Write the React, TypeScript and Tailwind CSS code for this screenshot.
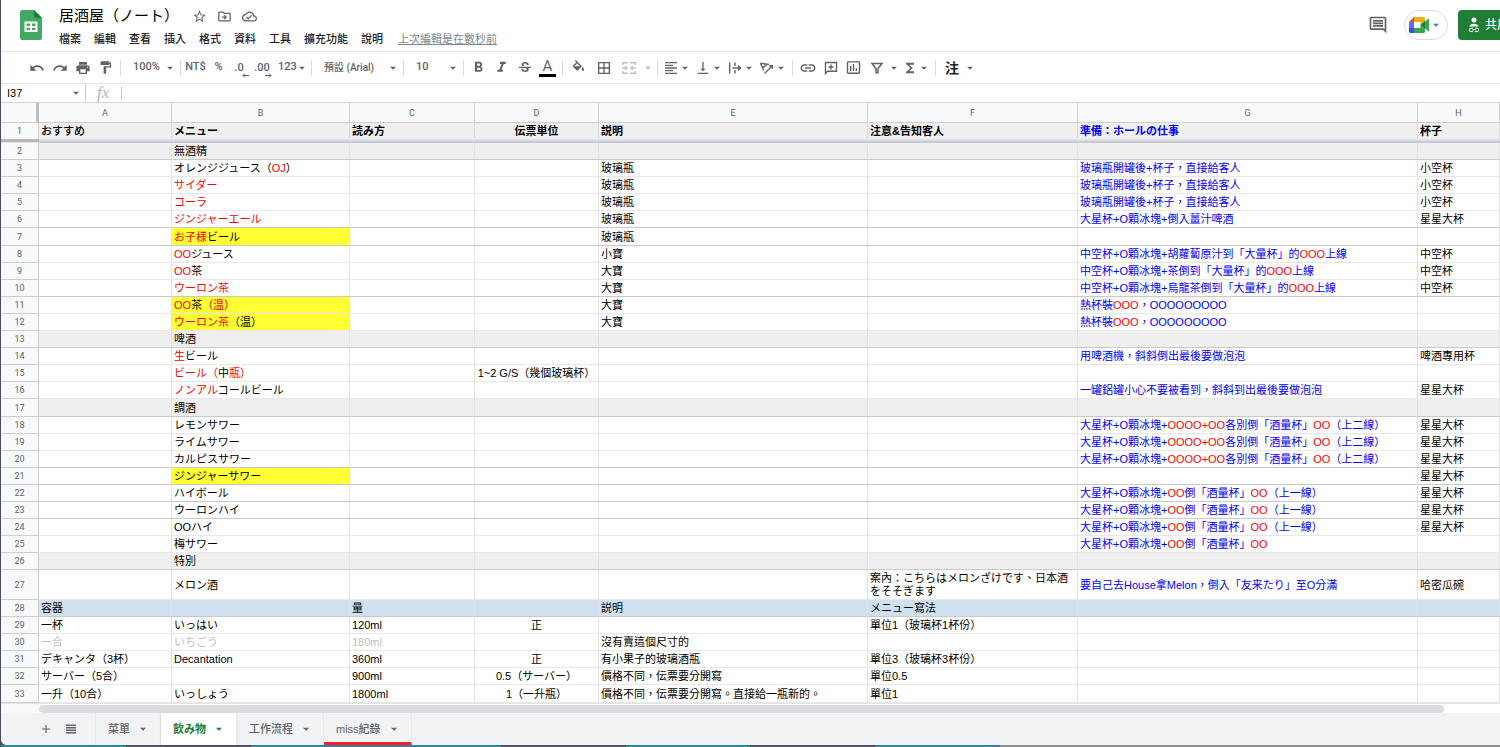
import { useState, type ReactNode } from 'react';
import {
  MdAdd,
  MdArrowDropDown,
  MdBorderAll,
  MdFormatAlignLeft,
  MdFormatBold,
  MdFormatItalic,
  MdFormatPaint,
  MdFunctions,
  MdInsertChartOutlined,
  MdLink,
  MdOutlineCloudDone,
  MdOutlineDriveFileMove,
  MdOutlineInsertComment,
  MdPrint,
  MdRedo,
  MdStarBorder,
  MdStrikethroughS,
  MdUndo,
  MdVerticalAlignBottom,
} from 'react-icons/md';

type Tone = 'black' | 'blue' | 'red' | 'gray';

interface Row {
  n: number;
  cells: string[];
  fill?: 'gray' | 'blue';
  h?: string;
  mark?: boolean;
  strong?: boolean;
  tone?: Tone;
}

const COLUMNS = ['A', 'B', 'C', 'D', 'E', 'F', 'G', 'H'];
const WIDTHS = ['w-[133px]', 'w-[178px]', 'w-[125px]', 'w-[124px]', 'w-[269px]', 'w-[210px]', 'w-[340px]', ''];

const TONES: Record<Tone, string> = {
  black: 'text-black',
  blue: 'text-[#0000ff]',
  red: 'text-[#ff0000]',
  gray: 'text-[#c0c0c0]',
};

const HEADER = ['おすすめ', 'メニュー', '読み方', '伝票単位', '説明', '注意&告知客人', '準備：ホールの仕事', '杯子'];

// *...* marks the red part of a cell
const ROWS: Row[] = [
  { n: 2, cells: ['', '無酒精'], fill: 'gray', strong: true },
  { n: 3, cells: ['', 'オレンジジュース（*OJ*）', '', '', '玻璃瓶', '', '玻璃瓶開罐後+杯子，直接給客人', '小空杯'] },
  { n: 4, cells: ['', '*サイダー*', '', '', '玻璃瓶', '', '玻璃瓶開罐後+杯子，直接給客人', '小空杯'] },
  { n: 5, cells: ['', '*コーラ*', '', '', '玻璃瓶', '', '玻璃瓶開罐後+杯子，直接給客人', '小空杯'] },
  { n: 6, cells: ['', '*ジンジャーエール*', '', '', '玻璃瓶', '', '大星杯+O顆冰塊+倒入薑汁啤酒', '星星大杯'], strong: true },
  { n: 7, cells: ['', '*お子様*ビール', '', '', '玻璃瓶'], mark: true, strong: true, h: 'h-[18px]' },
  { n: 8, cells: ['', '*OO*ジュース', '', '', '小寶', '', '中空杯+O顆冰塊+胡蘿蔔原汁到「大量杯」的*OOO*上線', '中空杯'] },
  { n: 9, cells: ['', '*OO*茶', '', '', '大寶', '', '中空杯+O顆冰塊+茶倒到「大量杯」的*OOO*上線', '中空杯'] },
  { n: 10, cells: ['', '*ウーロン茶*', '', '', '大寶', '', '中空杯+O顆冰塊+烏龍茶倒到「大量杯」的*OOO*上線', '中空杯'], strong: true },
  { n: 11, cells: ['', '*OO*茶*（温）*', '', '', '大寶', '', '熱杯裝*OOO*，OOOOOOOOO'], mark: true },
  { n: 12, cells: ['', '*ウーロン茶*（温）', '', '', '大寶', '', '熱杯裝*OOO*，OOOOOOOOO'], mark: true },
  { n: 13, cells: ['', '啤酒'], fill: 'gray', strong: true },
  { n: 14, cells: ['', '*生*ビール', '', '', '', '', '用啤酒機，斜斜倒出最後要做泡泡', '啤酒專用杯'] },
  { n: 15, cells: ['', '*ビール（*中*瓶）*', '', '1~2 G/S（幾個玻璃杯）'] },
  { n: 16, cells: ['', '*ノンアル*コールビール', '', '', '', '', '一罐鋁罐小心不要被看到，斜斜到出最後要做泡泡', '星星大杯'] },
  { n: 17, cells: ['', '調酒'], fill: 'gray', strong: true, h: 'h-[18px]' },
  { n: 18, cells: ['', 'レモンサワー', '', '', '', '', '大星杯+O顆冰塊+*OOOO+OO*各別倒「酒量杯」*OO*（上二線）', '星星大杯'] },
  { n: 19, cells: ['', 'ライムサワー', '', '', '', '', '大星杯+O顆冰塊+*OOOO+OO*各別倒「酒量杯」*OO*（上二線）', '星星大杯'] },
  { n: 20, cells: ['', 'カルピスサワー', '', '', '', '', '大星杯+O顆冰塊+*OOOO+OO*各別倒「酒量杯」*OO*（上二線）', '星星大杯'], strong: true },
  { n: 21, cells: ['', 'ジンジャーサワー', '', '', '', '', '', '星星大杯'], mark: true, strong: true },
  { n: 22, cells: ['', 'ハイボール', '', '', '', '', '大星杯+O顆冰塊+*OO*倒「酒量杯」*OO*（上一線）', '星星大杯'], strong: true },
  { n: 23, cells: ['', 'ウーロンハイ', '', '', '', '', '大星杯+O顆冰塊+*OO*倒「酒量杯」*OO*（上一線）', '星星大杯'], strong: true },
  { n: 24, cells: ['', 'OOハイ', '', '', '', '', '大星杯+O顆冰塊+*OO*倒「酒量杯」*OO*（上一線）', '星星大杯'] },
  { n: 25, cells: ['', '梅サワー', '', '', '', '', '大星杯+O顆冰塊+*OO*倒「酒量杯」*OO*'] },
  { n: 26, cells: ['', '特別'], fill: 'gray', strong: true },
  { n: 27, cells: ['', 'メロン酒', '', '', '', '案內：こちらはメロンざけです、日本酒をそそぎます', '要自己去House拿Melon，倒入「友来たり」至O分滿', '哈密瓜碗'], h: 'h-[30px]' },
  { n: 28, cells: ['容器', '', '量', '', '説明', 'メニュー寫法'], fill: 'blue', strong: true },
  { n: 29, cells: ['一杯', 'いっはい', '120ml', '正', '', '單位1（玻璃杯1杯份）'] },
  { n: 30, cells: ['一合', 'いちごう', '180ml', '', '沒有賣這個尺寸的'], tone: 'gray' },
  { n: 31, cells: ['デキャンタ（3杯）', 'Decantation', '360ml', '正', '有小果子的玻璃酒瓶', '單位3（玻璃杯3杯份）'] },
  { n: 32, cells: ['サーバー（5合）', '', '900ml', '0.5（サーバー）', '價格不同，伝票要分開寫', '單位0.5'] },
  { n: 33, cells: ['一升（10合）', 'いっしょう', '1800ml', '1（一升瓶）', '價格不同，伝票要分開寫。直接給一瓶新的。', '單位1'], h: 'h-[18px]' },
];

const MENUS = ['檔案', '編輯', '查看', '插入', '格式', '資料', '工具', '擴充功能', '說明'];
const TABS = ['菜單', '飲み物', '工作流程', 'miss紀錄'];

function RichText({ text }: { text: string }) {
  return (
    <>
      {text.split('*').map((part, i) =>
        i % 2 ? <span key={i} className="text-[#ff0000]">{part}</span> : part
      )}
    </>
  );
}

function Caret({ className = '' }: { className?: string }) {
  return <MdArrowDropDown className={`size-3.5 shrink-0 ${className}`} />;
}

function Divider() {
  return <span className="mx-[3px] h-4 w-px shrink-0 bg-[#dadce0]" />;
}

function Tool({ label, width = 'w-[23px]', children }: { label: string; width?: string; children: ReactNode }) {
  return (
    <button type="button" aria-label={label} className={`flex h-6 shrink-0 items-center justify-center ${width}`}>
      {children}
    </button>
  );
}

function MenuTool({ label, children }: { label: string; children: ReactNode }) {
  return (
    <button type="button" aria-label={label} className="flex h-6 w-8 shrink-0 items-center pl-0.5">
      {children}
      <Caret className="-ml-px" />
    </button>
  );
}

function SheetsLogo() {
  return (
    <svg viewBox="0 0 22 30" className="h-[30px] w-[22px]" aria-hidden="true">
      <path d="M2 0h12l8 8v20a2 2 0 0 1-2 2H2a2 2 0 0 1-2-2V2a2 2 0 0 1 2-2z" fill="#43a862" />
      <path d="M14 0l8 8h-6a2 2 0 0 1-2-2z" fill="#1e7e3e" />
      <path d="M4.500 11.500h13v10.500h-13zM6.500 13.500v2.400h3.600v-2.400zM12 13.500v2.400h3.500v-2.400zM6.500 17.700v2.400h3.600v-2.400zM12 17.700v2.400h3.500v-2.400z" fill="#fff" fillRule="evenodd" />
    </svg>
  );
}

function MeetLogo() {
  return (
    <svg viewBox="0 0 20 16" className="h-4 w-5 shrink-0" aria-hidden="true">
      <path d="M0 5l5-5v5z" fill="#ea4335" />
      <path d="M0 5h5v6H0z" fill="#5b6ef7" />
      <path d="M0 11h5v5H1.500A1.500 1.500 0 0 1 0 14.500z" fill="#3a50e0" />
      <path d="M5 0h9.500A1.500 1.500 0 0 1 16 1.500V5l-4.500 3V5H5z" fill="#e3b01e" />
      <path d="M5 11h6.500V8L16 12v2.500a1.500 1.500 0 0 1-1.500 1.500H5z" fill="#34a853" />
      <path d="M11.500 8L16 4v8z" fill="#1e7e3e" />
      <path d="M16 4.500l3-2.500c.5-.4 1-.1 1 .5v11c0 .6-.5.900-1 .5l-3-2.500z" fill="#34a853" />
    </svg>
  );
}

function ShareIcon() {
  return (
    <svg viewBox="0 0 12 16" className="h-4 w-3 shrink-0" fill="none" stroke="currentColor" aria-hidden="true">
      <circle cx="6" cy="3" r="2.500" fill="currentColor" stroke="none" />
      <path d="M1.500 9.500C1.500 7.500 4 6.700 6 6.700s4.500.8 4.500 2.800z" fill="currentColor" stroke="none" />
      <path d="M5 11.200H3a1.700 1.700 0 0 0 0 3.400h2M7 11.200h2a1.700 1.700 0 0 1 0 3.400H7M4.200 12.900h3.600" />
    </svg>
  );
}

function DecimalIcon({ text, add }: { text: string; add?: boolean }) {
  return (
    <span className="relative leading-3">
      {text}
      <svg viewBox="0 0 7 5" className={`absolute -bottom-1 h-[5px] w-[7px] ${add ? 'right-[-2px]' : 'right-[-5px]'}`} fill="none" stroke="currentColor" aria-hidden="true">
        {add ? <path d="M0 2.500h6M4 .5l2 2-2 2" /> : <path d="M7 2.500H1M3 .5l-2 2 2 2" />}
      </svg>
    </span>
  );
}

function FillIcon() {
  return (
    <svg viewBox="0 0 24 24" className="size-[15px]" fill="currentColor" aria-hidden="true">
      <path d="M16.560 8.940L7.620 0 6.210 1.410l2.380 2.380-5.150 5.150c-.59.59-.59 1.540 0 2.120l5.500 5.500c.29.290.68.440 1.060.440s.77-.15 1.060-.44l5.500-5.500c.59-.58.59-1.530 0-2.120zM5.210 10L10 5.210 14.790 10H5.210zM19 11.500s-2 2.170-2 3.500c0 1.100.9 2 2 2s2-.9 2-2c0-1.330-2-3.500-2-3.500z" />
    </svg>
  );
}

function MergeIcon() {
  return (
    <svg viewBox="0 0 16 16" className="size-4" fill="none" stroke="currentColor" strokeWidth="1.500" aria-hidden="true">
      <path d="M1.700 5V2.700H7M9 2.700h5.300V5M1.700 11v2.300H7M9 13.300h5.300V11M1 8h5M4.300 6.300L6 8 4.300 9.700M15 8h-5M11.700 6.300L10 8l1.700 1.700" />
    </svg>
  );
}

function OverflowIcon() {
  return (
    <svg viewBox="0 0 16 16" className="size-4" fill="none" stroke="currentColor" strokeWidth="1.400" aria-hidden="true">
      <path d="M2.700 2.500v11M8 2.500V6M8 10v3.500M5.500 8H13M11 5.500L13.500 8 11 10.500" />
    </svg>
  );
}

function RotateIcon() {
  return (
    <svg viewBox="0 0 16 16" className="size-4" fill="none" stroke="currentColor" strokeWidth="1.400" aria-hidden="true">
      <path d="M1.500 3.200l8.500 1.300M1.500 3.200L4.700 10.500M7.700 4.400L3.600 8M5.500 13.500L13 6M10.200 5.700h3.100v3.100" />
    </svg>
  );
}

function CommentPlusIcon() {
  return (
    <svg viewBox="0 0 16 16" className="size-4" fill="none" stroke="currentColor" strokeWidth="1.400" aria-hidden="true">
      <path d="M2.500 13.500V2.500h11v8.800H4.700zM8 4.500v5M5.500 7h5" />
    </svg>
  );
}

function FilterIcon() {
  return (
    <svg viewBox="0 0 16 16" className="size-4" fill="none" stroke="currentColor" strokeWidth="1.500" aria-hidden="true">
      <path d="M3 3.500h10L9 8.500v4.200H7V8.500z" />
    </svg>
  );
}

function ListIcon() {
  return (
    <svg viewBox="0 0 12 12" className="size-3" fill="none" stroke="currentColor" strokeWidth="1.500" aria-hidden="true">
      <path d="M1 2.300h10M1 4.800h10M1 7.300h10M1 9.800h10" />
    </svg>
  );
}

function Header() {
  const [title, setTitle] = useState('居酒屋（ノート）');

  return (
    <header className="flex h-[52px] items-start overflow-hidden border-b border-[#e6e7e8] pl-[19px] text-[#202124]">
      <a href="#" aria-label="Sheets" className="mt-2.5 shrink-0">
        <SheetsLogo />
      </a>
      <div className="ml-[11px] min-w-0 pt-1.5">
        <div className="flex h-5 items-center text-[#5f6368]">
          <input
            aria-label="Title"
            value={title}
            onChange={(e) => setTitle(e.target.value)}
            className="w-[139px] bg-transparent pl-1.5 text-[15px] text-black outline-none"
          />
          <div className="flex items-center gap-2.5">
            <button type="button" aria-label="Star"><MdStarBorder className="size-[15px]" /></button>
            <button type="button" aria-label="Move"><MdOutlineDriveFileMove className="size-[15px]" /></button>
            <button type="button" aria-label="Saved"><MdOutlineCloudDone className="size-[15px]" /></button>
          </div>
        </div>
        <nav className="mt-1 flex h-[18px] items-center gap-px text-[11px] font-medium">
          {MENUS.map((m) => (
            <button key={m} type="button" className="px-1.5">{m}</button>
          ))}
          <a href="#" className="ml-2 font-normal text-[#80868b] underline">上次編輯是在數秒前</a>
        </nav>
      </div>
      <div className="ml-auto flex shrink-0 items-center pt-2.5">
        <button type="button" aria-label="Comments" className="mr-4 text-[#5f6368]">
          <MdOutlineInsertComment className="size-5" />
        </button>
        <button type="button" aria-label="Meet" className="mr-2.5 flex h-[30px] w-11 items-center justify-center rounded-full border border-[#dadce0]">
          <MeetLogo />
          <Caret className="text-[#4a6cf7]" />
        </button>
        <div className="w-[42px] overflow-hidden">
          <button type="button" className="flex h-[30px] w-16 items-center gap-[5px] rounded bg-[#1e7e34] pl-2.5 text-xs font-medium whitespace-nowrap text-white">
            <ShareIcon />
            共用
          </button>
        </div>
      </div>
    </header>
  );
}

function Toolbar() {
  return (
    <div className="flex h-8 items-center overflow-hidden border-b border-[#e3e4e5] pl-6 font-['Roboto','Noto_Sans_CJK_TC',sans-serif] text-[11px] font-medium text-[#5f6368]">
      <Tool label="Undo"><MdUndo className="size-4" /></Tool>
      <Tool label="Redo"><MdRedo className="size-4" /></Tool>
      <Tool label="Print"><MdPrint className="size-4" /></Tool>
      <Tool label="Paint format"><MdFormatPaint className="size-[15px]" /></Tool>
      <Divider />
      <button type="button" className="flex h-6 w-[53px] shrink-0 items-center justify-between pl-[9px]">100%<Caret /></button>
      <Divider />
      <Tool label="Currency">NT$</Tool>
      <Tool label="Percent">%</Tool>
      <Tool label="Decrease decimals" width="w-[18px]"><DecimalIcon text=".0" /></Tool>
      <Tool label="Increase decimals" width="w-7"><DecimalIcon text=".00" add /></Tool>
      <button type="button" className="flex h-6 w-8 shrink-0 items-center pl-0.5">123<Caret className="-ml-0.5" /></button>
      <Divider />
      <button type="button" className="flex h-6 w-[85px] shrink-0 items-center justify-between pl-[9px] text-[10px] whitespace-nowrap">預設 (Arial)<Caret /></button>
      <Divider />
      <button type="button" className="flex h-6 w-[53px] shrink-0 items-center justify-between pl-[9px]">10<Caret /></button>
      <Divider />
      <Tool label="Bold"><MdFormatBold className="size-[17px]" /></Tool>
      <Tool label="Italic"><MdFormatItalic className="size-[17px]" /></Tool>
      <Tool label="Strikethrough"><MdStrikethroughS className="size-4" /></Tool>
      <Tool label="Text color">
        <span className="w-[17px] border-b-[3px] border-black text-center text-[15px] leading-4 font-normal">A</span>
      </Tool>
      <Divider />
      <Tool label="Fill color" width="w-[25px]"><FillIcon /></Tool>
      <Tool label="Borders" width="w-[25px]"><MdBorderAll className="size-4" /></Tool>
      <div className="flex text-[#bdc1c6]">
        <Tool label="Merge" width="w-[25px]"><MergeIcon /></Tool>
        <Tool label="Merge options" width="w-[13px]"><Caret /></Tool>
      </div>
      <Divider />
      <MenuTool label="Align"><MdFormatAlignLeft className="size-4" /></MenuTool>
      <MenuTool label="Vertical align"><MdVerticalAlignBottom className="size-4" /></MenuTool>
      <MenuTool label="Wrapping"><OverflowIcon /></MenuTool>
      <MenuTool label="Rotation"><RotateIcon /></MenuTool>
      <Divider />
      <Tool label="Link"><MdLink className="size-[18px]" /></Tool>
      <Tool label="Comment"><CommentPlusIcon /></Tool>
      <Tool label="Chart"><MdInsertChartOutlined className="size-[17px]" /></Tool>
      <Tool label="Filter"><FilterIcon /></Tool>
      <Tool label="Filter views" width="w-3"><Caret /></Tool>
      <MenuTool label="Functions"><MdFunctions className="size-4" /></MenuTool>
      <Divider />
      <button type="button" className="flex h-6 items-center pl-1.5 text-sm font-bold text-[#202124]">
        注<Caret className="ml-1 text-[#5f6368]" />
      </button>
    </div>
  );
}

function FormulaBar() {
  return (
    <div className="flex h-[19px] items-center border-b border-[#d5d5d5]">
      <label className="flex w-[85px] shrink-0 items-center border-r border-[#c8c8c8] text-[#5f6368]">
        <input aria-label="Name box" defaultValue="I37" className="w-[68px] bg-transparent pl-1.5 font-['Liberation_Sans',sans-serif] text-[11px] leading-4 text-black outline-none" />
        <Caret />
      </label>
      <label htmlFor="formula" className="w-9 shrink-0 border-r border-[#c8c8c8] pl-[11px] font-['Liberation_Serif',serif] text-[17px] leading-[14px] text-[#b5b5b5] italic">fx</label>
      <input id="formula" className="min-w-0 flex-1 bg-transparent px-1 text-[11px] leading-4 outline-none" />
    </div>
  );
}

function GridRow({ row }: { row: Row }) {
  const line = row.strong ? 'border-b-[#c9c9c9]' : 'border-b-[#e8e8e8]';
  const fill = row.fill === 'gray' ? 'bg-[#efefef]' : row.fill === 'blue' ? 'bg-[#cfe0f1]' : '';

  return (
    <tr className={row.h ?? 'h-[17px]'}>
      <th scope="row" className="border-r border-b border-[#cfcfcf] bg-[#f8f9fa] font-['Roboto',sans-serif] text-[9px] font-normal text-[#5f6368]">{row.n}</th>
      {COLUMNS.map((col, i) => {
        let tone: Tone = col === 'G' ? 'blue' : 'black';
        if (row.tone && i < 3) tone = row.tone;
        return (
          <td
            key={col}
            className={`overflow-hidden border-r border-b border-r-[#e2e2e2] px-0.5 ${line} ${
              row.mark && col === 'B' ? 'bg-[#ffff33]' : fill
            } ${TONES[tone]} ${col === 'D' ? 'text-center' : ''} ${row.n === 27 && col === 'F' ? 'leading-[13px]' : 'whitespace-nowrap'}`}
          >
            <RichText text={row.cells[i] ?? ''} />
          </td>
        );
      })}
    </tr>
  );
}

function Grid() {
  return (
    <table className="w-full table-fixed border-separate border-spacing-0 text-[11px] leading-[14px]">
      <colgroup>
        <col className="w-[38px]" />
        {COLUMNS.map((col, i) => <col key={col} className={WIDTHS[i]} />)}
      </colgroup>
      <thead>
        <tr className="h-5">
          <th className="border-r-[3px] border-b border-r-[#bdbdbd] border-b-[#cfcfcf] bg-[#f8f9fa]" />
          {COLUMNS.map((col) => (
            <th key={col} scope="col" className="border-r border-b border-[#cfcfcf] bg-[#f8f9fa] font-['Roboto',sans-serif] text-[9px] font-normal text-[#5f6368]">{col}</th>
          ))}
        </tr>
        <tr className="h-4">
          <th scope="row" className="border-r border-[#cfcfcf] bg-[#f8f9fa] font-['Roboto',sans-serif] text-[9px] font-normal text-[#5f6368]">1</th>
          {HEADER.map((text, i) => (
            <td
              key={text}
              className={`border-r border-[#dcdcdc] bg-[#efefef] px-0.5 whitespace-nowrap ${i === 0 ? 'font-medium' : 'font-bold'} ${
                i === 3 ? 'text-center' : ''
              } ${i === 6 ? TONES.blue : TONES.black}`}
            >
              {text}
            </td>
          ))}
        </tr>
        <tr className="h-1">
          <td className="border-b border-[#e4e4e4] bg-[#b7b7b7]" />
          <td colSpan={8} className="border-b-2 border-[#c6cacf] bg-[#dbe1ea]" />
        </tr>
      </thead>
      <tbody>
        {ROWS.map((row) => <GridRow key={row.n} row={row} />)}
      </tbody>
    </table>
  );
}

function SheetTabs() {
  const [active, setActive] = useState('飲み物');

  return (
    <footer className="flex h-8 items-stretch bg-[#f1f3f4] text-[11px] font-medium text-[#5f6368]">
      <div className="flex w-[95px] items-center gap-3 border-r border-[#e6e8ea] pl-[38px]">
        <button type="button" aria-label="Add sheet"><MdAdd className="size-3.5" /></button>
        <button type="button" aria-label="All sheets"><ListIcon /></button>
      </div>
      {TABS.map((tab) => (
        <button
          key={tab}
          type="button"
          onClick={() => setActive(tab)}
          className={`flex items-center gap-1.5 border-r border-[#e6e8ea] pr-2.5 pl-3 ${
            active === tab ? 'bg-white font-bold text-[#188038] shadow' : ''
          } ${tab === 'miss紀錄' ? 'border-b-[3px] border-b-[#f5222d] pt-[3px]' : ''}`}
        >
          {tab}
          <Caret />
        </button>
      ))}
    </footer>
  );
}

export default function App() {
  return (
    <div className="bg-[#4b4d63] pl-px font-['Liberation_Sans','Noto_Sans_CJK_TC',sans-serif]">
      <div className="overflow-hidden rounded-bl-md bg-white">
        <Header />
        <Toolbar />
        <FormulaBar />
        <Grid />
        <div className="flex h-2.5 items-center border-t border-[#e3e3e3]">
          <div className="h-full w-[38px] shrink-0 bg-[#f8f9fa]" />
          <div className="mr-14 h-2 flex-1 rounded-full bg-[#dadce0]" />
        </div>
        <SheetTabs />
      </div>
      <div className="flex h-0.5">
        <div className="w-1/12 bg-[#3c7f9c]" />
        <div className="w-1/12 bg-[#55505f]" />
        <div className="w-1/6 bg-[#3c7f9c]" />
        <div className="w-1/12 bg-[#55505f]" />
        <div className="w-1/12 bg-[#3c7f9c]" />
        <div className="w-1/12 bg-[#55505f]" />
        <div className="w-1/12 bg-[#3c7f9c]" />
        <div className="flex-1 bg-[#8f8f8f]" />
      </div>
    </div>
  );
}
